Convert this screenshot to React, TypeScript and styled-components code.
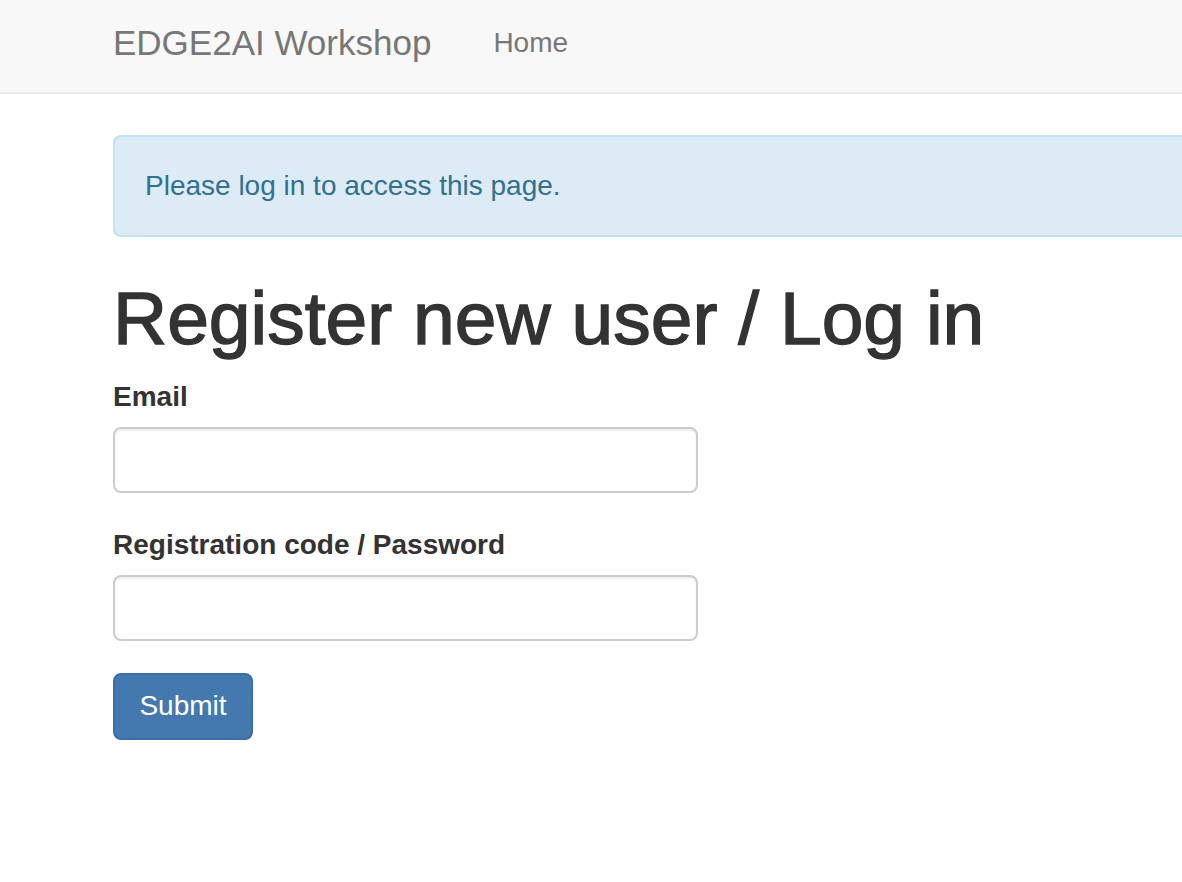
import React from "react";
import styled, { createGlobalStyle } from "styled-components";

const GlobalStyle = createGlobalStyle`
  html, body {
    margin: 0;
    padding: 0;
    background: #fff;
    overflow: hidden;
  }
  body {
    font-family: "Liberation Sans", Arial, Helvetica, sans-serif;
    font-size: 28px;
    line-height: 40px;
    color: #333;
  }
  * { box-sizing: border-box; }
`;

const Navbar = styled.nav`
  height: 94px;
  background: #f8f8f8;
  border-bottom: 2px solid #e7e7e7;
  display: flex;
  align-items: center;
  padding: 0 0 6px 113px;
`;

const Brand = styled.a`
  font-size: 35px;
  line-height: 40px;
  color: #777;
  text-decoration: none;
  margin-right: 62px;
`;

const NavLink = styled.a`
  font-size: 28px;
  line-height: 40px;
  color: #777;
  text-decoration: none;
`;

const Container = styled.main`
  padding-left: 113px;
  width: 1182px;
`;

const Alert = styled.div`
  margin-top: 41px;
  margin-right: -20px;
  height: 102px;
  background: #dcebf6;
  border: 2px solid #bfe3ef;
  border-right: none;
  border-radius: 8px 0 0 8px;
  color: #31708f;
  padding: 0 30px;
  display: flex;
  align-items: center;
  font-size: 28px;
`;

const Title = styled.h1`
  margin: 40px 0 18px;
  font-size: 75px;
  line-height: 82px;
  font-weight: 500;
  color: #333;
  -webkit-text-stroke: 1.4px #333;
`;

const Form = styled.form`
  width: 585px;
  display: flex;
  flex-direction: column;
`;

const FormGroup = styled.div`
  display: flex;
  flex-direction: column;
  margin-bottom: 32px;
`;

const Label = styled.label`
  font-weight: 700;
  font-size: 28px;
  line-height: 40px;
  margin-bottom: 10px;
  color: #333;
`;

const Input = styled.input`
  height: 66px;
  width: 100%;
  border: 2px solid #ccc;
  border-radius: 8px;
  box-shadow: inset 0 2px 2px rgba(0, 0, 0, 0.075);
  padding: 12px 24px;
  font-family: inherit;
  font-size: 28px;
  color: #555;
  background: #fff;
  outline: none;
`;

const Button = styled.button`
  align-self: flex-start;
  width: 140px;
  height: 67px;
  background: #4479b0;
  border: 2px solid #3a6ea5;
  border-radius: 8px;
  color: #fff;
  font-family: inherit;
  font-size: 28px;
  line-height: 40px;
  padding: 0 0 2px;
  cursor: pointer;
`;

export default function App() {
  return (
    <>
      <GlobalStyle />
      <Navbar>
        <Brand href="#">EDGE2AI Workshop</Brand>
        <NavLink href="#">Home</NavLink>
      </Navbar>
      <Container>
        <Alert>Please log in to access this page.</Alert>
        <Title>Register new user / Log in</Title>
        <Form onSubmit={(e) => e.preventDefault()}>
          <FormGroup>
            <Label htmlFor="email">Email</Label>
            <Input id="email" type="text" />
          </FormGroup>
          <FormGroup>
            <Label htmlFor="password">Registration code / Password</Label>
            <Input id="password" type="password" />
          </FormGroup>
          <Button type="submit">Submit</Button>
        </Form>
      </Container>
    </>
  );
}
